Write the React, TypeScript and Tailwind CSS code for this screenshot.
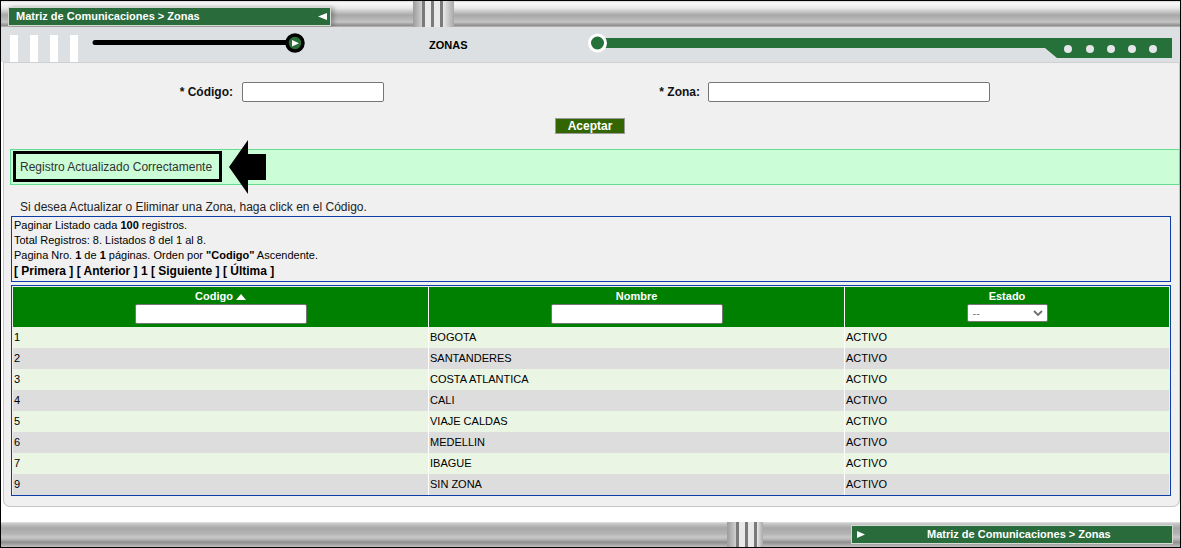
const rows = [
  ["1", "BOGOTA"],
  ["2", "SANTANDERES"],
  ["3", "COSTA ATLANTICA"],
  ["4", "CALI"],
  ["5", "VIAJE CALDAS"],
  ["6", "MEDELLIN"],
  ["7", "IBAGUE"],
  ["9", "SIN ZONA"],
];

const Grip = ({ w }: { w: number }) => (
  <div className="flex h-full" style={{ width: w }}>
    <div className="w-[9px] h-full bg-[linear-gradient(90deg,#9c9c9c,#cfcfcf)]" />
    <div className="w-[3px] h-full bg-[#7a7a7a]" />
    <div className="w-[6px] h-full bg-[#e9e9e9]" />
    <div className="w-[3px] h-full bg-[#7a7a7a]" />
    <div className="w-[6px] h-full bg-[#e9e9e9]" />
    <div className="w-[3px] h-full bg-[#7a7a7a]" />
    <div className="flex-1 h-full bg-[linear-gradient(90deg,#e9e9e9,#a8a8a8)]" />
  </div>
);

const TopBar = () => (
  <div className="h-[26px] flex items-start bg-[linear-gradient(180deg,#d8d8d8_0px,#fafafa_2px,#e8e8e8_7px,#a8a8a8_14px,#bababa_19px,#c6c6c6_21px,#a4a4a4_23px,#8a8a8a_25px,#d4d4d4_26px)]">
    <div className="ml-[7px] mt-[6px] w-[323px] h-[19px] bg-[#2a6b3b] border border-[#d2dad2] flex items-center justify-between pl-[7px] pr-[3px] shadow-[3px_0_4px_rgba(0,0,0,0.25)]">
      <span className="text-white text-[11px] font-bold leading-none">Matriz de Comunicaciones &gt; Zonas</span>
      <svg width="9" height="7" viewBox="0 0 9 7">
        <polygon points="0,3.5 9,0 9,7" fill="#fff" />
      </svg>
    </div>
    <div className="ml-[82px] h-full">
      <Grip w={41} />
    </div>
  </div>
);

const Band = () => (
  <div className="h-[35px] bg-[#dde0e3] flex items-start">
    <div className="flex gap-[12px] pl-[9px] mt-[8px]">
      <div className="w-[8px] h-[27px] bg-white" />
      <div className="w-[8px] h-[27px] bg-white" />
      <div className="w-[8px] h-[27px] bg-white" />
      <div className="w-[8px] h-[27px] bg-white" />
    </div>
    <svg className="ml-[10px]" width="220" height="35" viewBox="0 0 220 35">
      <line x1="7" y1="15.5" x2="205" y2="15.5" stroke="#000" strokeWidth="5" strokeLinecap="round" />
      <circle cx="207" cy="16" r="8" fill="#2b6e3a" stroke="#000" strokeWidth="3.5" />
      <polygon points="204,13 211,16.2 204,19.5" fill="#fff" />
    </svg>
    <div className="w-[280px] pl-[121px] mt-[12px] text-[11px] font-bold leading-[13px] text-black">ZONAS</div>
    <svg width="591" height="35" viewBox="0 0 591 35">
      <polygon points="12,11 584,11 584,31 469,31 457,21 12,21" fill="#26703a" />
      <circle cx="9.5" cy="16" r="8" fill="#26703a" stroke="#fff" strokeWidth="3" />
      {[480, 502, 523, 544, 565].map((x) => (
        <circle key={x} cx={x} cy="22" r="4" fill="#e4e6e9" />
      ))}
    </svg>
  </div>
);

const Panel = () => (
  <div className="ml-[2px] w-[1177px] h-[445px] bg-[#f0f0f0] border border-[#c6c6c6] border-t-[#d0d0d0] rounded-b-[7px] flex flex-col">
    <div className="mt-[19px] flex items-center h-[20px] text-[12px] font-bold text-[#111]">
      <div className="w-[229px] text-right">* Código:</div>
      <div className="ml-[9px] w-[142px] h-[20px] bg-white border border-[#767676] rounded-[2px]" />
      <div className="w-[316px] text-right">* Zona:</div>
      <div className="ml-[8px] w-[282px] h-[20px] bg-white border border-[#767676] rounded-[2px]" />
    </div>
    <div className="ml-[551px] mt-[16px] w-[70px] h-[16px] bg-[#336600] border border-[#9a9a9a] text-white text-[12px] font-bold leading-none flex items-center justify-center">
      Aceptar
    </div>
    <div className="relative mt-[15px] ml-[6px] mr-[-1px] h-[36px] border border-[#63de8f] bg-[#cbfdd6] flex items-start">
      <div className="ml-[2px] mt-[1px] w-[209px] h-[31px] border-[3px] border-black flex items-center pl-[4px] text-[12px] text-[#333]">
        Registro Actualizado Correctamente
      </div>
      <svg className="absolute left-[218px] top-[-10px]" width="38" height="54" viewBox="0 0 38 54">
        <polygon points="0,27 19,0 19,14 37,14 37,40 19,40 19,54" fill="#000" />
      </svg>
    </div>
    <div className="mt-[15px] pl-[16px] text-[12px] leading-[14px] text-[#222]">
      Si desea Actualizar o Eliminar una Zona, haga click en el Código.
    </div>
    <div className="mt-[2px] ml-[7px] w-[1160px] h-[66px] border border-[#0b3fa6] pl-[2px] pt-[1px] text-[11px] leading-[15px] text-black">
      <div>
        Paginar Listado cada <b>100</b> registros.
      </div>
      <div>Total Registros: 8. Listados 8 del 1 al 8.</div>
      <div>
        Pagina Nro. <b>1</b> de <b>1</b> páginas. Orden por <b>"Codigo"</b> Ascendente.
      </div>
      <div className="text-[12px] font-bold leading-[17px]">[ Primera ] [ Anterior ] 1 [ Siguiente ] [ Última ]</div>
    </div>
    <div className="mt-[3px] ml-[7px] w-[1160px] border border-[#0b3fa6] px-[1px] pt-[1px]">
      <div className="grid grid-cols-[415px_416px_325px] bg-[#008000] h-[40px] text-white text-[11px] font-bold leading-[13px]">
        <div className="flex flex-col items-center pt-[3px]">
          <div className="flex items-center gap-[3px]">
            <span>Codigo</span>
            <svg width="10" height="6" viewBox="0 0 10 6">
              <polygon points="0,6 5,0 10,6" fill="#fff" />
            </svg>
          </div>
          <div className="mt-[1px] w-[172px] h-[20px] bg-white border border-[#767676] rounded-[2px]" />
        </div>
        <div className="flex flex-col items-center pt-[3px] border-l border-white">
          <span>Nombre</span>
          <div className="mt-[1px] w-[172px] h-[20px] bg-white border border-[#767676] rounded-[2px]" />
        </div>
        <div className="flex flex-col items-center pt-[3px] border-l border-white">
          <span>Estado</span>
          <div className="mt-[1px] w-[81px] h-[18px] bg-white border border-[#767676] rounded-[2px] flex items-center justify-between pl-[5px] pr-[4px]">
            <span className="text-[#777] font-normal text-[11px]">--</span>
            <svg width="10" height="6" viewBox="0 0 10 6">
              <polyline points="1,1 5,5 9,1" fill="none" stroke="#6f6f6f" strokeWidth="1.8" />
            </svg>
          </div>
        </div>
      </div>
      {rows.map(([code, name], i) => (
        <div
          key={code}
          className={`grid grid-cols-[415px_416px_325px] h-[21px] text-[11px] leading-[21px] text-black ${
            i % 2 === 0 ? "bg-[#eaf5e3]" : "bg-[#dddddd]"
          }`}
        >
          <div className="pl-[1px]">{code}</div>
          <div className="pl-[1px] border-l border-white">{name}</div>
          <div className="pl-[1px] border-l border-white">ACTIVO</div>
        </div>
      ))}
    </div>
  </div>
);

const BottomBar = () => (
  <div className="h-[25px] flex items-start bg-[linear-gradient(180deg,#e2e2e2_0px,#c4c4c4_2px,#a8a8a8_6px,#b4b4b4_12px,#c8c8c8_15px,#b0b0b0_18px,#8e8e8e_20px,#a0a0a0_22px,#c0c0c0_25px)]">
    <div className="ml-[726px] h-full">
      <Grip w={36} />
    </div>
    <div className="ml-[88px] mt-[3px] w-[322px] h-[19px] bg-[#2a6b3b] border border-[#d2dad2] flex items-center pl-[5px]">
      <svg width="8" height="7" viewBox="0 0 8 7">
        <polygon points="0,0 8,3.5 0,7" fill="#fff" />
      </svg>
      <span className="ml-[62px] text-white text-[11px] font-bold leading-none">Matriz de Comunicaciones &gt; Zonas</span>
    </div>
  </div>
);

export default function App() {
  return (
    <div className="w-[1181px] h-[548px] border border-black bg-white flex flex-col overflow-hidden font-['Liberation_Sans',Arial,sans-serif]">
      <TopBar />
      <Band />
      <Panel />
      <div className="h-[15px] shrink-0" />
      <BottomBar />
    </div>
  );
}
